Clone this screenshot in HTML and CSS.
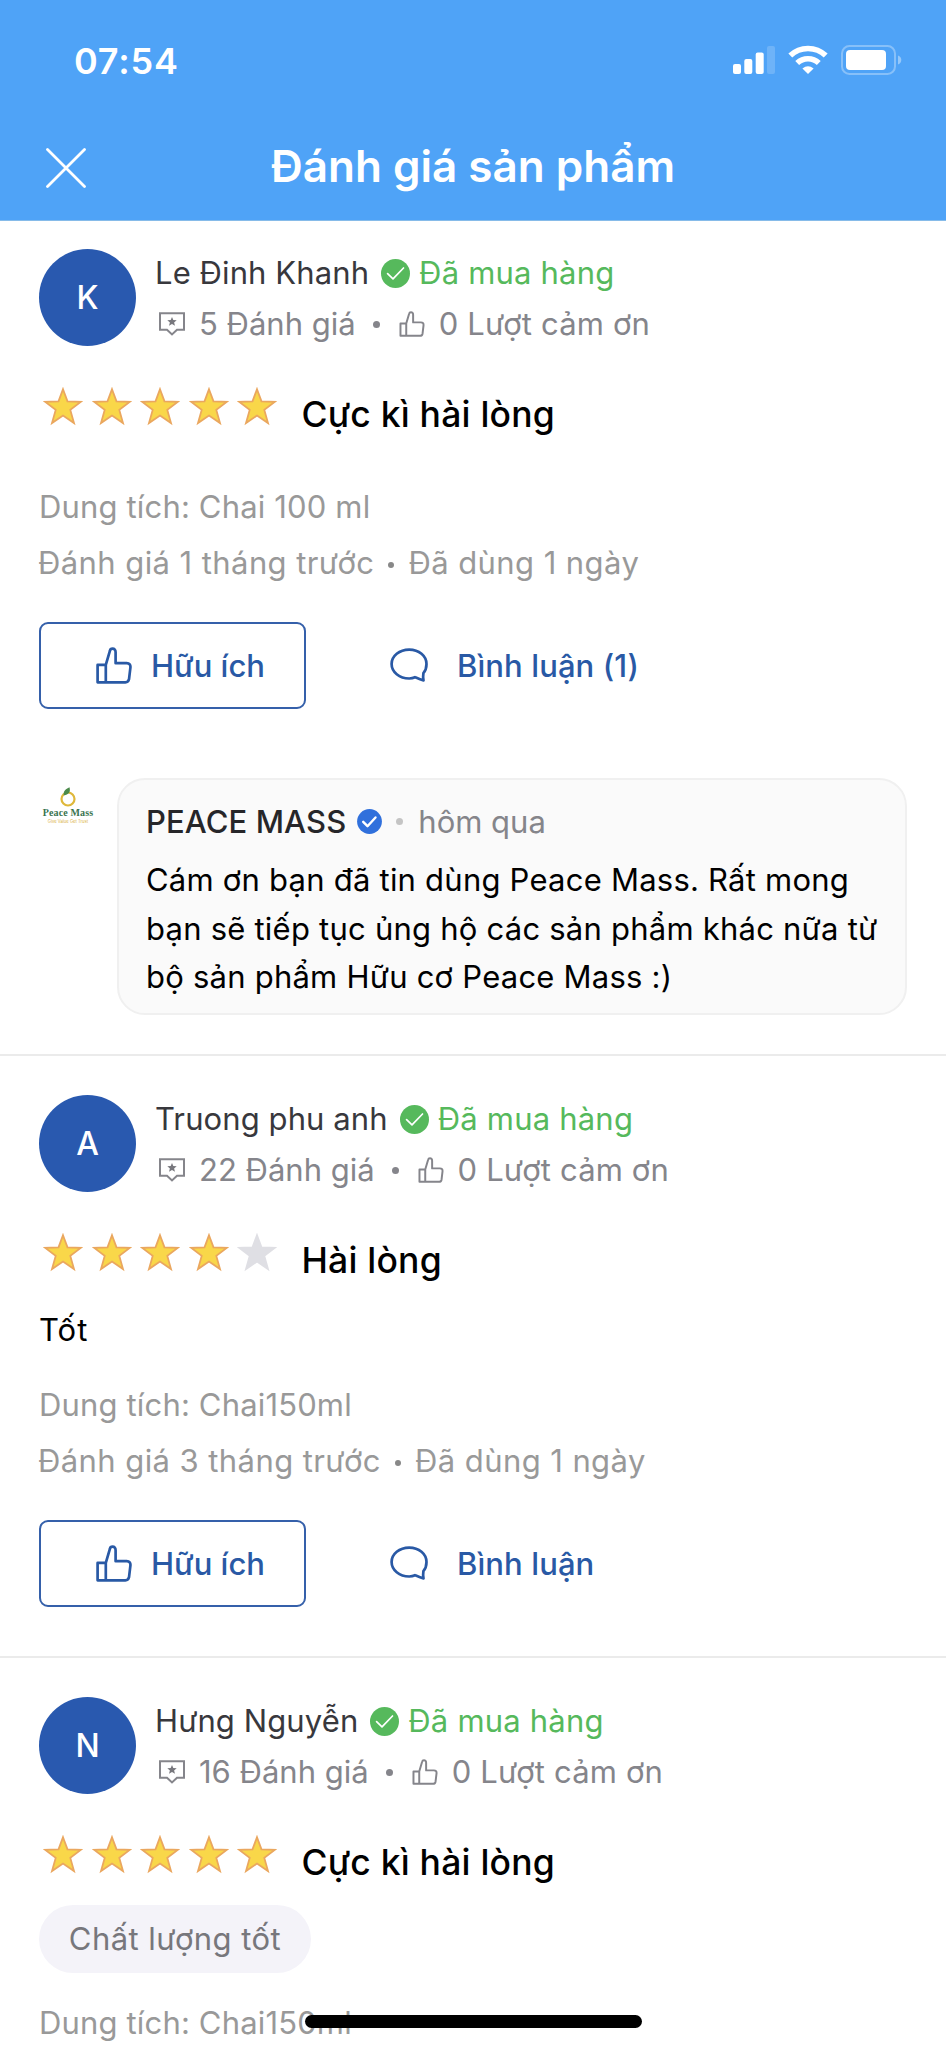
FILE: index.html
```html
<!DOCTYPE html>
<html lang="vi">
<head>
<meta charset="utf-8">
<title>Đánh giá sản phẩm</title>
<link rel="stylesheet" href="styles.css">
</head>
<body>
<svg class="sprite" aria-hidden="true">
  <symbol id="check" viewBox="0 0 29 29"><circle cx="14.5" cy="14.5" r="14.5" fill="#56b95c"/><path d="M6.6 14.6l5.4 5.2 10.5-10.8" fill="none" stroke="#fff" stroke-width="1.7" stroke-linecap="round" stroke-linejoin="round"/></symbol>
  <symbol id="badge" viewBox="0 0 26 24"><path d="M1 1.2h24v16.6h-7l-5 4.6-5-4.6H1z" fill="none" stroke="#85858b" stroke-width="2"/><path d="M13 4.9l1.3 3.2 3.4.2-2.6 2.2.9 3.3-3-1.8-3 1.8.9-3.3-2.6-2.2 3.4-.2z" fill="#77777d"/></symbol>
  <symbol id="thumb" viewBox="0 0 36 37"><path d="M1.6 17.9h8.2v17.4H1.6zM9.8 35.3h19.6c2 0 3.2-1 3.6-3l1.4-11.7c.3-2.700-.9-4.400-3.700-4.400H19.600V5.300c0-2.200-1.100-3.600-3.100-3.600-1.500 0-2.300.7-2.600 2.200L9.800 17.900"/></symbol>
  <symbol id="bubble" viewBox="0 0 38 35"><path d="M25 29.2c2.5 1.1 5 2.3 8.5 3.2-.4-2.500-.5-5-.1-7.200C35.600 22.600 36.500 19.500 36.500 16 36.500 8 29 1.600 19.200 1.600S1.600 8 1.600 16s7.800 14.500 17.600 14.500c2 0 4-.4 5.800-1.300z"/></symbol>
  <symbol id="star" viewBox="0 0 40 39"><path d="M20 2.200l4.500 12.200 13.200.5-10.400 8 3.700 13.200L20 28.600 9 36.100l3.700-13.200-10.400-8 13.200-.5z"/></symbol>
</svg>

<header class="header">
  <div class="status">
    <span class="time">07:54</span>
    <span class="indicators">
      <svg width="42" height="28" viewBox="0 0 42 28" fill="#fff"><rect y="18" width="8" height="10" rx="2"/><rect x="11.300" y="13" width="8" height="15" rx="2"/><rect x="22.700" y="6.500" width="8" height="21.500" rx="2"/><rect x="34" width="8" height="28" rx="2" opacity=".18"/></svg>
      <svg class="wifi" width="40" height="30" viewBox="0 0 40 30" fill="none" stroke="#fff" stroke-width="5.600"><path d="M2.300 10.600a25.500 25.500 0 0 1 35.400 0"/><path d="M9.200 18a15.700 15.700 0 0 1 21.600 0"/><path d="M20 29l-5.600-5.500q5.600-4.600 11.200 0z" fill="#fff" stroke="none"/></svg>
      <svg width="61" height="30" viewBox="0 0 61 30"><rect x="1" y="1" width="53" height="28" rx="7.500" fill="none" stroke="#fff" stroke-width="2" opacity=".32"/><rect x="5" y="5" width="40" height="20" rx="4" fill="#fff"/><path d="M57 10.500c4.400 1.400 4.400 7.600 0 9z" fill="#fff" opacity=".4"/></svg>
    </span>
  </div>
  <div class="titlebar">
    <svg class="close" width="40" height="40" viewBox="0 0 40 40"><path d="M1.500 1.500l37 37M38.500 1.500l-37 37"/></svg>
    <h1 class="title">Đánh giá sản phẩm</h1>
  </div>
</header>

<main class="reviews">
  <article class="review review-first">
    <div class="profile">
      <div class="avatar">K</div>
      <div class="meta">
        <div class="who"><span class="name">Le Đinh Khanh</span><svg class="check"><use href="#check"/></svg><span class="bought">Đã mua hàng</span></div>
        <div class="stats"><svg class="badge"><use href="#badge"/></svg><span class="count">5 Đánh giá</span><i class="dot"></i><svg class="thumb-sm"><use href="#thumb"/></svg><span class="thanks">0 Lượt cảm ơn</span></div>
      </div>
    </div>
    <div class="rating">
      <div class="stars"><svg class="star"><use href="#star"/></svg><svg class="star"><use href="#star"/></svg><svg class="star"><use href="#star"/></svg><svg class="star"><use href="#star"/></svg><svg class="star"><use href="#star"/></svg></div>
      <strong class="verdict">Cực kì hài lòng</strong>
    </div>
    <div class="details">
      <p class="detail">Dung tích: Chai 100 ml</p>
      <p class="detail detail-time"><span>Đánh giá 1 tháng trước</span><i class="dot dot-sm"></i><span>Đã dùng 1 ngày</span></p>
    </div>
    <div class="actions">
      <button class="useful"><svg class="thumb"><use href="#thumb"/></svg><span>Hữu ích</span></button>
      <button class="comment"><svg class="bubble"><use href="#bubble"/></svg><span>Bình luận (1)</span></button>
    </div>
    <div class="reply">
      <div class="brand">
        <svg width="16" height="20" viewBox="0 0 16 20"><circle cx="8" cy="12" r="6.500" fill="none" stroke="#dfb83b" stroke-width="2.200"/><path d="M3.800 8.500C3 4.500 5.500 2 9.500.3c1 3.800.2 6.700-4 7.700z" fill="#4b8a4a"/></svg>
        <span class="brand-name">Peace Mass</span>
        <span class="brand-line">Give Value Get Trust</span>
      </div>
      <div class="card">
        <div class="card-head"><b class="shop">PEACE MASS</b><svg class="verified" viewBox="0 0 25 25"><circle cx="12.500" cy="12.500" r="12.400" fill="#3070dc"/><path d="M6.200 12.800l4.300 4.400 8-8.700" fill="none" stroke="#fff" stroke-width="2.400" stroke-linecap="round" stroke-linejoin="round"/></svg><i class="dot dot-pale"></i><span class="when">hôm qua</span></div>
        <p class="message">Cám ơn bạn đã tin dùng Peace Mass. Rất mong<br>bạn sẽ tiếp tục ủng hộ các sản phẩm khác nữa từ<br>bộ sản phẩm Hữu cơ Peace Mass :)</p>
      </div>
    </div>
  </article>

  <article class="review review-second">
    <div class="profile">
      <div class="avatar">A</div>
      <div class="meta">
        <div class="who"><span class="name">Truong phu anh</span><svg class="check"><use href="#check"/></svg><span class="bought">Đã mua hàng</span></div>
        <div class="stats"><svg class="badge"><use href="#badge"/></svg><span class="count">22 Đánh giá</span><i class="dot"></i><svg class="thumb-sm"><use href="#thumb"/></svg><span class="thanks">0 Lượt cảm ơn</span></div>
      </div>
    </div>
    <div class="rating">
      <div class="stars"><svg class="star"><use href="#star"/></svg><svg class="star"><use href="#star"/></svg><svg class="star"><use href="#star"/></svg><svg class="star"><use href="#star"/></svg><svg class="star star-off"><use href="#star"/></svg></div>
      <strong class="verdict">Hài lòng</strong>
    </div>
    <p class="content">Tốt</p>
    <div class="details">
      <p class="detail">Dung tích: Chai150ml</p>
      <p class="detail detail-time"><span>Đánh giá 3 tháng trước</span><i class="dot dot-sm"></i><span>Đã dùng 1 ngày</span></p>
    </div>
    <div class="actions">
      <button class="useful"><svg class="thumb"><use href="#thumb"/></svg><span>Hữu ích</span></button>
      <button class="comment"><svg class="bubble"><use href="#bubble"/></svg><span>Bình luận</span></button>
    </div>
  </article>

  <article class="review review-third">
    <div class="profile">
      <div class="avatar">N</div>
      <div class="meta">
        <div class="who"><span class="name">Hưng Nguyễn</span><svg class="check"><use href="#check"/></svg><span class="bought">Đã mua hàng</span></div>
        <div class="stats"><svg class="badge"><use href="#badge"/></svg><span class="count">16 Đánh giá</span><i class="dot"></i><svg class="thumb-sm"><use href="#thumb"/></svg><span class="thanks">0 Lượt cảm ơn</span></div>
      </div>
    </div>
    <div class="rating">
      <div class="stars"><svg class="star"><use href="#star"/></svg><svg class="star"><use href="#star"/></svg><svg class="star"><use href="#star"/></svg><svg class="star"><use href="#star"/></svg><svg class="star"><use href="#star"/></svg></div>
      <strong class="verdict">Cực kì hài lòng</strong>
    </div>
    <span class="chip">Chất lượng tốt</span>
    <div class="details">
      <p class="detail">Dung tích: Chai150ml</p>
    </div>
  </article>
</main>
<div class="home-indicator"></div>
</body>
</html>
```

FILE: styles.css
```css
* { box-sizing: border-box; }

html, body { margin: 0; height: 2047px; overflow: hidden; }

body {
  position: relative;
  width: 946px;
  background: #fff;
  color: #000;
  font-family: Inter, "Noto Sans", sans-serif;
  font-size: 31px;
}

p, h1 { margin: 0; }
svg { display: block; flex: none; }
span, b, strong { white-space: nowrap; }
.sprite { position: absolute; width: 0; height: 0; }

.header {
  height: 221px;
  background: #4fa3f7;
  border-bottom: 1px solid #86bbe9;
  color: #fff;
}

.status {
  display: flex;
  justify-content: space-between;
  align-items: flex-start;
  height: 120px;
  padding: 40px 44px 0 74px;
}

.time { font-size: 36px; line-height: 42px; font-weight: 600; letter-spacing: .8px; }
.indicators { display: flex; align-items: center; gap: 13px; padding-top: 5px; }

.titlebar {
  display: grid;
  grid-template-columns: 40px 1fr 40px;
  align-items: center;
  height: 96px;
  padding: 0 46px;
}

.close { fill: none; stroke: #fff; stroke-width: 2.8; stroke-linecap: round; }

.title {
  padding-bottom: 4px;
  font-size: 44px;
  line-height: 54px;
  font-weight: 600;
  text-align: center;
  white-space: nowrap;
}

.review { padding: 39px 39px 0; border-bottom: 2px solid #ebebeb; }
.review-first { padding-top: 28px; padding-bottom: 39px; }
.review-second { padding-bottom: 49px; }
.review-third { border-bottom: 0; }

.profile { display: flex; height: 99px; }

.avatar {
  width: 97px;
  height: 97px;
  border-radius: 50%;
  background: #2959af;
  color: #fff;
  font-size: 32px;
  font-weight: 500;
  line-height: 97px;
  text-align: center;
}

.meta { display: flex; flex-direction: column; gap: 3px; padding-left: 19px; }
.who, .stats { display: flex; align-items: center; height: 48px; line-height: 48px; }
.name { color: #38383d; letter-spacing: .1px; }
.check { width: 29px; height: 29px; margin: 0 9px 0 12px; }
.bought { color: #56b95c; letter-spacing: .2px; }
.stats { color: #85858b; }
.badge { width: 26px; height: 24px; margin: 0 14px 0 4px; }
.thanks { letter-spacing: .15px; }

.dot { width: 7px; height: 7px; border-radius: 50%; background: #85858b; margin: 0 19px 0 17px; }
.dot-sm { width: 6px; height: 6px; background: #888; margin: 4px 14px 0 14px; }
.dot-pale { background: #c4c4c4; margin: 0 15px 0 14px; }

.thumb-sm { width: 26px; height: 26px; margin-right: 14px; fill: none; stroke: #85858b; stroke-width: 2.8; stroke-linejoin: round; }

.rating { display: flex; height: 52px; margin-top: 39px; }
.stars { display: flex; gap: 8.6px; padding-left: 4px; }
.star { width: 40px; height: 39px; fill: #f9d749; stroke: #eaa75f; stroke-width: 1.8; }
.star-off { fill: #dfdfe4; stroke: #dfdfe4; }
.verdict { margin: 3px 0 0 24px; font-size: 35.5px; line-height: 50px; font-weight: 500; letter-spacing: .22px; }

.details { margin-top: 40px; color: #999; letter-spacing: .16px; }
.detail { display: flex; align-items: center; height: 56px; line-height: 56px; white-space: nowrap; }
.detail-time { margin-left: -1px; letter-spacing: .42px; }
.content { margin-top: 21px; line-height: 48px; letter-spacing: 1px; }
.content + .details { margin-top: 23px; }

.actions { display: flex; height: 87px; margin-top: 31px; color: #2959a5; }

button {
  display: flex;
  align-items: center;
  padding: 0;
  border: 0;
  background: none;
  color: inherit;
  font: inherit;
  font-weight: 500;
}

.useful { width: 267px; padding-left: 55px; border: 2px solid #3560aa; border-radius: 9px; }
.thumb { width: 36px; height: 37px; margin-right: 19px; fill: none; stroke: #2959a5; stroke-width: 2.7; stroke-linejoin: round; }
.comment { padding-left: 84px; letter-spacing: .1px; }
.bubble { width: 38px; height: 35px; margin-right: 29px; fill: none; stroke: #2959a5; stroke-width: 2.7; stroke-linejoin: round; }

.reply { display: flex; margin-top: 69px; }

.brand {
  display: flex;
  flex-direction: column;
  align-items: center;
  width: 58px;
  margin-right: 20px;
  padding-top: 9px;
}

.brand-name { font: bold 10px/12px "Liberation Serif", serif; letter-spacing: .15px; color: #39744f; }
.brand-line { font-size: 4.2px; line-height: 5px; color: #d9b03c; }

.card {
  flex: 1;
  height: 237px;
  padding: 17px 0 0 27px;
  border: 2px solid #f0f0f0;
  border-radius: 28px;
  background: #fafafa;
}

.card-head { display: flex; align-items: center; height: 48px; }
.shop { color: #262629; font-weight: 500; letter-spacing: .1px; }
.verified { width: 25px; height: 25px; margin-left: 11px; }
.when { color: #85858a; }
.message { margin-top: 11px; line-height: 48.5px; letter-spacing: .23px; white-space: nowrap; }

.chip {
  display: block;
  width: 272px;
  height: 68px;
  margin-top: 18px;
  border-radius: 34px;
  background: #f4f3f9;
  color: #77777c;
  line-height: 68px;
  letter-spacing: .45px;
  text-align: center;
}

.chip + .details { margin-top: 22px; }

.home-indicator {
  position: absolute;
  left: 305px;
  top: 2015px;
  width: 337px;
  height: 13px;
  border-radius: 7px;
  background: #000;
}
```
